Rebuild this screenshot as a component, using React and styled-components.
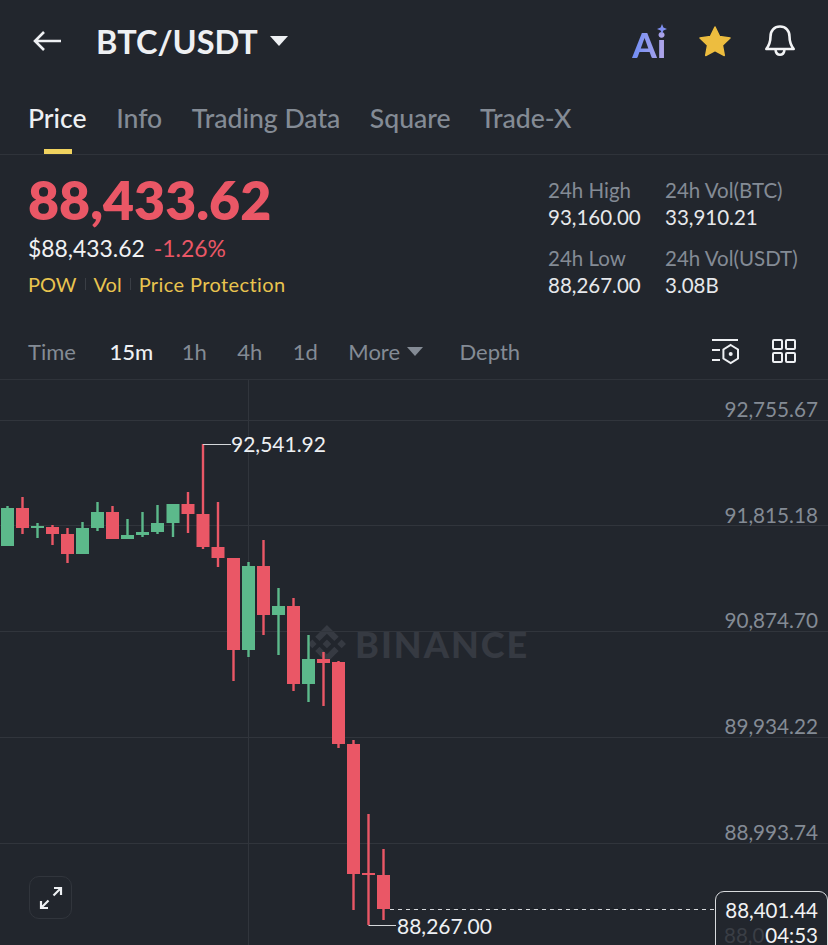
import React from "react";
import styled, { createGlobalStyle } from "styled-components";

const FONT = `"Lato", "Open Sans", "Liberation Sans", sans-serif`;
const RED = "#ea5766";
const GREEN = "#5cb98b";
const YELLOW = "#e9c44f";
const MUTED = "#848b95";

const GlobalStyle = createGlobalStyle`
  html, body {
    margin: 0;
    background: #22262d;
    font-family: ${FONT};
  }
`;

// cx, body top, body bottom, wick top, wick bottom, up?
const CANDLES = [
  [7.5, 508, 546, 506, 546, 1],
  [22.5, 508, 528, 497, 534, 0],
  [37.5, 526, 528, 523, 538, 1],
  [52.5, 527, 534, 525, 545, 0],
  [67.5, 534, 554, 528, 563, 0],
  [82.5, 528, 554, 522, 554, 1],
  [97.5, 512, 528, 502, 531, 1],
  [112.5, 512, 539, 506, 539, 0],
  [127.5, 535, 539, 519, 539, 1],
  [142.5, 532, 535, 512, 537, 1],
  [157.5, 523, 532, 505, 534, 1],
  [173, 504, 523, 504, 537, 1],
  [188, 504, 514, 492, 533, 0],
  [203, 514, 547, 444, 549, 0],
  [218, 547, 558, 502, 567, 0],
  [233.5, 558, 650, 558, 681, 0],
  [248.5, 566, 650, 562, 657, 1],
  [263.5, 566, 615, 540, 635, 0],
  [278.5, 606, 615, 588, 655, 1],
  [293.5, 606, 684, 598, 691, 0],
  [308.5, 659, 684, 635, 702, 1],
  [323.5, 659, 663, 652, 706, 0],
  [338.5, 662, 744, 661, 748, 0],
  [353.5, 744, 874, 740, 910, 0],
  [368.5, 873, 875, 814, 925, 0],
  [383.5, 875, 909, 849, 920, 0],
];

const GRID_LINES = [420, 525, 631, 737, 843];

const AXIS_LABELS = [
  { value: "92,755.67", top: 17 },
  { value: "91,815.18", top: 123 },
  { value: "90,874.70", top: 228 },
  { value: "89,934.22", top: 334 },
  { value: "88,993.74", top: 440 },
];

const TABS = ["Price", "Info", "Trading Data", "Square", "Trade-X"];
const INTERVALS = ["Time", "15m", "1h", "4h", "1d"];

const ChartDrawing = () => (
  <ChartSvg viewBox="0 380 828 565">
    {GRID_LINES.map((y) => (
      <line key={y} x1="0" x2="828" y1={y + 0.5} y2={y + 0.5} stroke="#31353c" />
    ))}
    <line x1="248.5" x2="248.5" y1="380" y2="945" stroke="#31353c" />
    {CANDLES.map(([cx, top, bottom, wickTop, wickBottom, up]) => (
      <g key={cx} fill={up ? GREEN : RED}>
        <rect x={cx - 1.2} y={wickTop} width="2.4" height={wickBottom - wickTop} />
        <rect x={cx - 6.5} y={top} width="13" height={bottom - top} />
      </g>
    ))}
    <path d="M203 444.5H231M368.500 925.500H396" stroke="#d5d7da" strokeWidth="1" fill="none" />
    <line x1="390" x2="716" y1="909.5" y2="909.5" stroke="#d5d7da" strokeDasharray="4 4" />
  </ChartSvg>
);

const App = () => (
  <Page>
    <GlobalStyle />
    <Header>
      <BackIcon viewBox="0 0 30 24" fill="none" stroke="#eef0f3" strokeWidth="2.6">
        <path d="M29 12H3M12 3l-9 9 9 9" />
      </BackIcon>
      <Pair>BTC/USDT</Pair>
      <Caret />
      <HeaderIcons>
        <AiMark>
          Ai
          <Spark viewBox="0 0 10 10">
            <path d="M5 0l1.400 3.600L10 5 6.400 6.400 5 10 3.600 6.400 0 5l3.600-1.400z" fill="#7f8ff0" />
          </Spark>
        </AiMark>
        <svg width="34" height="32" viewBox="0 0 34 32">
          <path
            d="M17 2l4.600 9.600 10.400 1.400-7.600 7.200 1.900 10.300L17 25.500l-9.300 5 1.900-10.300L2 13l10.400-1.400z"
            fill="#edbd3f"
            stroke="#edbd3f"
            strokeLinejoin="round"
            strokeWidth="1.500"
          />
        </svg>
        <svg width="32" height="34" viewBox="0 0 32 34" fill="none" stroke="#f2f3f5" strokeWidth="2.600" strokeLinejoin="round">
          <path d="M16 2.500c-5.800 0-9.500 4.300-9.500 10 0 6.500-1.500 9-4.200 12.500h27.400c-2.700-3.500-4.200-6-4.200-12.500 0-5.700-3.700-10-9.500-10z" />
          <path d="M11.500 26c.5 3 2.300 4.800 4.500 4.800s4-1.800 4.500-4.800" />
        </svg>
      </HeaderIcons>
    </Header>

    <TabBar>
      {TABS.map((tab, i) => (
        <Tab key={tab} $active={i === 0}>
          {tab}
        </Tab>
      ))}
    </TabBar>

    <Summary>
      <PriceColumn>
        <BigPrice>88,433.62</BigPrice>
        <PriceLine>
          <span>$88,433.62</span>
          <Change>-1.26%</Change>
        </PriceLine>
        <TagRow>
          <span>POW</span>
          <TagDivider />
          <span>Vol</span>
          <TagDivider />
          <span>Price Protection</span>
        </TagRow>
      </PriceColumn>
      <StatsGrid>
        <Stat>
          <StatLabel>24h High</StatLabel>
          <StatValue>93,160.00</StatValue>
        </Stat>
        <Stat>
          <StatLabel>24h Vol(BTC)</StatLabel>
          <StatValue>33,910.21</StatValue>
        </Stat>
        <Stat>
          <StatLabel>24h Low</StatLabel>
          <StatValue>88,267.00</StatValue>
        </Stat>
        <Stat>
          <StatLabel>24h Vol(USDT)</StatLabel>
          <StatValue>3.08B</StatValue>
        </Stat>
      </StatsGrid>
    </Summary>

    <IntervalBar>
      {INTERVALS.map((item) => (
        <Interval key={item} $active={item === "15m"}>
          {item}
        </Interval>
      ))}
      <Interval>
        More <SmallCaret />
      </Interval>
      <Interval $depth>Depth</Interval>
      <ToolIcons>
        <svg width="28" height="28" viewBox="0 0 28 28" fill="none" stroke="#eef0f3" strokeWidth="2">
          <path d="M0 3h26M0 13h8M0 23h8" />
          <path d="M18.700 8l7.300 4.500v9l-7.300 4.500-7.300-4.500v-9z" />
          <circle cx="18.700" cy="17" r="2" fill="#eef0f3" stroke="none" />
        </svg>
        <svg width="26" height="26" viewBox="0 0 26 26" fill="none" stroke="#eef0f3" strokeWidth="2">
          <rect x="2" y="2" width="9" height="9" rx="1" />
          <rect x="15" y="2" width="9" height="9" rx="1" />
          <rect x="2" y="15" width="9" height="9" rx="1" />
          <rect x="15" y="15" width="9" height="9" rx="1" />
        </svg>
      </ToolIcons>
    </IntervalBar>

    <Chart>
      <Watermark>
        <svg width="38" height="38" viewBox="0 0 126 126" fill="#363a42">
          <path d="M38.171 53.203 62.759 28.616l24.6 24.6 14.307-14.307L62.759 0 23.864 38.896zM0 62.759l14.307-14.307 14.307 14.307-14.307 14.307zM38.171 72.316l24.588 24.587 24.6-24.6 14.315 14.3-38.907 38.91-38.893-38.893-.02-.02zM97.211 62.765l14.307-14.307 14.307 14.307-14.307 14.307zM77.269 62.752h.006L62.759 48.237 48.256 62.741l14.503 14.543 14.516-14.516z" />
        </svg>
        BINANCE
      </Watermark>
      <ChartDrawing />
      {AXIS_LABELS.map(({ value, top }) => (
        <AxisLabel key={value} style={{ top }}>
          {value}
        </AxisLabel>
      ))}
      <ExtremeLabel $left={231} $top={52}>92,541.92</ExtremeLabel>
      <ExtremeLabel $left={397} $top={534}>88,267.00</ExtremeLabel>
      <ExpandButton>
        <svg width="28" height="28" viewBox="0 0 28 28" fill="none" stroke="#eef0f3" strokeWidth="2.200">
          <path d="M4 24l7.500-7.500M16.500 11.500L24 4M17 4h7v7M4 17v7h7" />
        </svg>
      </ExpandButton>
      <PriceTag>
        <GhostPrice>88,0</GhostPrice>
        <TagPrice>88,401.44</TagPrice>
        <TagPrice>04:53</TagPrice>
      </PriceTag>
    </Chart>
  </Page>
);

const Page = styled.div`
  width: 828px;
  height: 945px;
  overflow: hidden;
  background: #22262d;
  display: flex;
  flex-direction: column;
`;

const Header = styled.header`
  height: 82px;
  display: flex;
  align-items: center;
  padding: 0 32px 0 32px;
`;

const BackIcon = styled.svg`
  width: 30px;
  height: 24px;
  margin-right: 34px;
`;

const Pair = styled.div`
  font-size: 32.500px;
  font-weight: 700;
  color: #eef0f3;
`;

const Caret = styled.div`
  width: 0;
  height: 0;
  margin-left: 12px;
  border-left: 9px solid transparent;
  border-right: 9px solid transparent;
  border-top: 10px solid #eef0f3;
`;

const HeaderIcons = styled.div`
  margin-left: auto;
  display: flex;
  align-items: center;
  gap: 32px;
`;

const AiMark = styled.div`
  position: relative;
  font-size: 35px;
  font-weight: 900;
  line-height: 1;
  padding-top: 6px;
  background: linear-gradient(90deg, #6f8df5, #b3a6e8);
  -webkit-background-clip: text;
  background-clip: text;
  color: transparent;
`;

const Spark = styled.svg`
  position: absolute;
  top: 3px;
  right: -1px;
  width: 10px;
  height: 10px;
`;

const TabBar = styled.nav`
  height: 73px;
  box-sizing: border-box;
  display: flex;
  gap: 29.500px;
  padding: 0 28px;
  border-bottom: 1px solid #2f333a;
`;

const Tab = styled.div`
  position: relative;
  padding-top: 20px;
  font-size: 26.600px;
  font-weight: 500;
  color: ${(p) => (p.$active ? "#eef0f3" : MUTED)};

  &::after {
    content: "";
    display: ${(p) => (p.$active ? "block" : "none")};
    position: absolute;
    left: 16px;
    bottom: 0;
    width: 28px;
    height: 5px;
    background: #f0d25f;
  }
`;

const Summary = styled.section`
  height: 170px;
  box-sizing: border-box;
  display: flex;
  justify-content: space-between;
  padding: 14px 29px 0 28px;
`;

const PriceColumn = styled.div`
  display: flex;
  flex-direction: column;
`;

const BigPrice = styled.div`
  font-size: 53.600px;
  line-height: 60px;
  font-weight: 800;
  color: ${RED};
`;

const PriceLine = styled.div`
  display: flex;
  gap: 9px;
  margin-top: 4px;
  font-size: 22.900px;
  line-height: 30px;
  color: #f1f2f4;
`;

const Change = styled.span`
  color: ${RED};
`;

const TagRow = styled.div`
  display: flex;
  align-items: center;
  gap: 8px;
  margin-top: 6px;
  font-size: 20px;
  line-height: 30px;
  color: ${YELLOW};

  span:last-child {
    letter-spacing: 0.4px;
  }
`;

const TagDivider = styled.i`
  width: 1px;
  height: 12px;
  background: #3a3e45;
`;

const StatsGrid = styled.div`
  display: grid;
  grid-template-columns: 117px 134px;
  grid-auto-rows: 68px;
  padding-top: 8px;
`;

const Stat = styled.div`
  display: flex;
  flex-direction: column;
`;

const StatLabel = styled.div`
  font-size: 20.500px;
  line-height: 27px;
  color: ${MUTED};
  white-space: nowrap;
`;

const StatValue = styled.div`
  font-size: 20.500px;
  line-height: 26px;
  color: #e6e8eb;
`;

const IntervalBar = styled.div`
  height: 54px;
  box-sizing: border-box;
  display: flex;
  align-items: center;
  gap: 30.500px;
  padding: 0 31px 2px 28px;
`;

const Interval = styled.div`
  display: flex;
  align-items: center;
  gap: 7px;
  font-size: 22px;
  font-weight: ${(p) => (p.$active ? 500 : 400)};
  color: ${(p) => (p.$active ? "#eef0f3" : MUTED)};
  margin-left: ${(p) => (p.$depth ? "6px" : p.$active ? "3px" : 0)};
  margin-right: ${(p) => (p.$active ? "-2px" : 0)};
`;

const SmallCaret = styled.i`
  width: 0;
  height: 0;
  border-left: 8px solid transparent;
  border-right: 8px solid transparent;
  border-top: 9px solid ${MUTED};
`;

const ToolIcons = styled.div`
  margin-left: auto;
  display: flex;
  align-items: center;
  gap: 31px;
`;

const Chart = styled.div`
  position: relative;
  flex: 1;
  border-top: 1px solid #2f333a;
  overflow: hidden;
`;

const ChartSvg = styled.svg`
  position: absolute;
  inset: 0;
  width: 828px;
  height: 565px;
`;

const Watermark = styled.div`
  position: absolute;
  left: 308px;
  top: 242px;
  display: flex;
  align-items: center;
  gap: 9px;
  font-size: 36px;
  font-weight: 900;
  letter-spacing: 2px;
  color: #363a42;
`;

const AxisLabel = styled.div`
  position: absolute;
  right: 10px;
  font-size: 20.700px;
  line-height: 24px;
  color: ${MUTED};
`;

const ExtremeLabel = styled.div`
  position: absolute;
  left: ${(p) => p.$left}px;
  top: ${(p) => p.$top}px;
  font-size: 21px;
  line-height: 24px;
  color: #eef0f3;
`;

const ExpandButton = styled.div`
  position: absolute;
  left: 29px;
  top: 496px;
  width: 43px;
  height: 43px;
  box-sizing: border-box;
  display: flex;
  align-items: center;
  justify-content: center;
  border: 1.500px solid #31353c;
  border-radius: 10px;
`;

const PriceTag = styled.div`
  position: absolute;
  left: 715px;
  top: 511px;
  width: 113px;
  height: 70px;
  box-sizing: border-box;
  padding: 6px 0 0 8px;
  border: 1.500px solid #d8dadd;
  border-radius: 9px;
  background: #22262d;
`;

const TagPrice = styled.div`
  position: relative;
  width: 94px;
  text-align: right;
  font-size: 20.500px;
  line-height: 25px;
  color: #f1f2f4;
`;

const GhostPrice = styled.div`
  position: absolute;
  left: 8px;
  top: 31px;
  font-size: 20.500px;
  line-height: 25px;
  color: #3a3e45;
`;

export default App;
